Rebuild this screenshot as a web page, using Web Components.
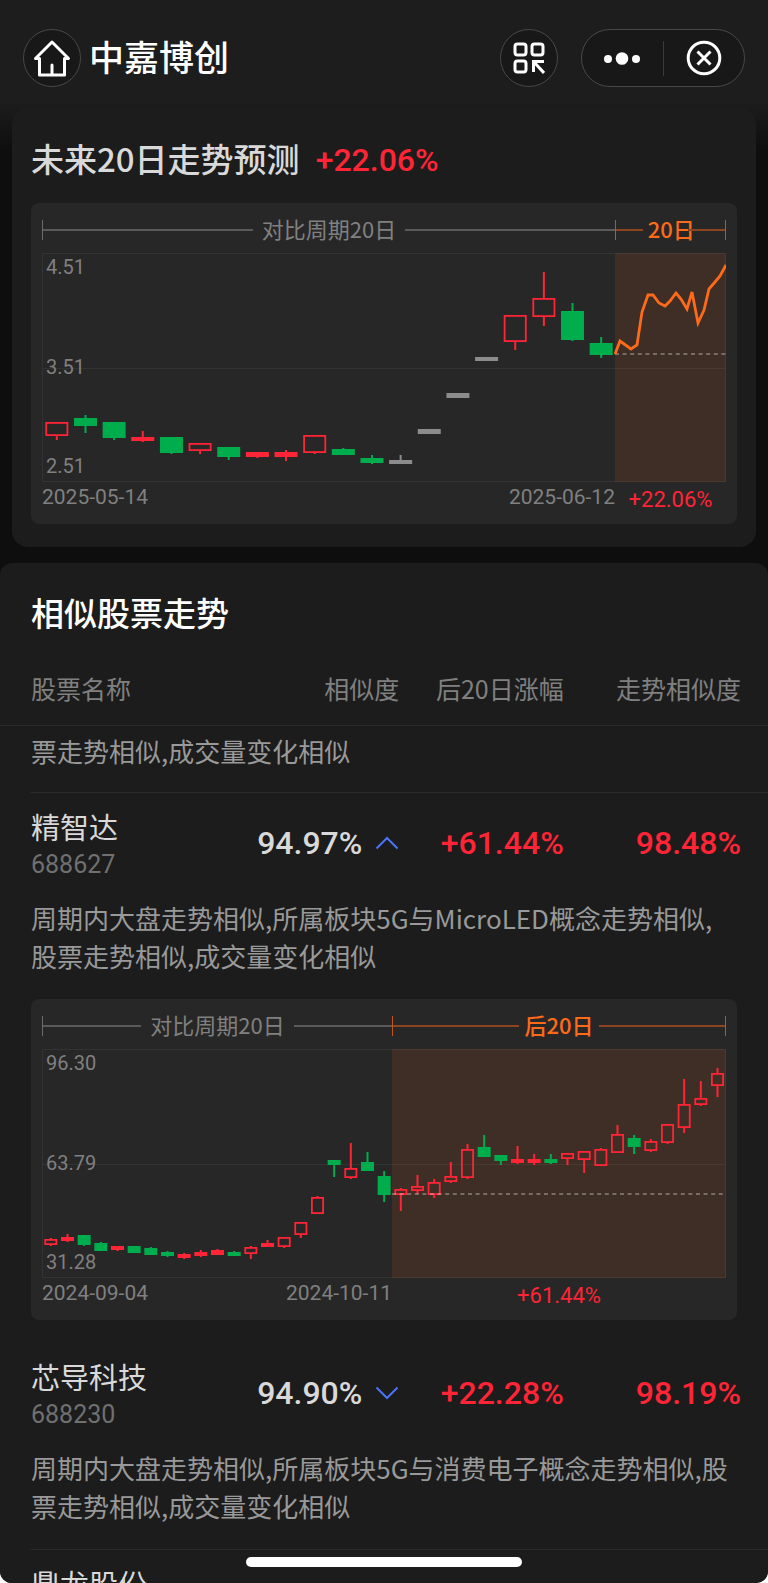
<!DOCTYPE html>
<html lang="zh-CN">
<head>
<meta charset="UTF-8">
<meta name="viewport" content="width=device-width, initial-scale=1">
<title>中嘉博创</title>
<style>
    html, body { margin: 0; height: 100%; background: #fff; }
    body { font-family: "Noto Sans CJK SC", "Noto Sans", sans-serif; }
</style>
</head>
<body>
<stock-app>
    <app-header slot="header" heading="中嘉博创"></app-header>
    <forecast-card heading="未来20日走势预测" change="+22.06%">
        <kline-chart data="forecast"></kline-chart>
    </forecast-card>
    <similar-stocks heading="相似股票走势"></similar-stocks>
</stock-app>

<script>
// Candles: [kind, high, top, bottom, low], y in plot units (0..229)
// kind: r = hollow up, f = flat up, g = down, n = unchanged
const CHARTS = {
    forecast: {
        past: '对比周期20日', next: '20日', compact: true,
        labels: ['4.51', '3.51', '2.51'],
        from: '2025-05-14', to: '2025-06-12', change: '+22.06%',
        split: 573, slots: 20, body: 23, base: 101,
        candles: [
            ['r', 169, 169, 183, 187], ['g', 162, 165, 173, 180], ['g', 169, 169, 185, 187],
            ['f', 178, 184, 188, 189], ['g', 184, 184, 200, 201], ['r', 190, 190, 198, 201],
            ['g', 194, 194, 204, 207], ['f', 199, 199, 204, 205], ['f', 197, 199, 204, 208],
            ['r', 182, 182, 200, 201], ['g', 195, 196, 202, 202], ['g', 202, 205, 210, 211],
            ['n', 202, 207, 211, 211], ['n', 176, 176, 181, 181], ['n', 140, 140, 145, 145],
            ['n', 104, 104, 108, 108], ['r', 62, 62, 89, 97], ['r', 19, 45, 64, 73],
            ['g', 50, 58, 87, 88], ['g', 84, 90, 102, 105]
        ],
        line: '573,101 578,88 589,96 595,92 600,59 606,42 611,42 617,50 623,53 628,48 634,40 639,46 645,56 650,39 656,70 662,57 667,36 673,29 678,23 684,12'
    },
    '688627': {
        past: '对比周期20日', next: '后20日',
        labels: ['96.30', '63.79', '31.28'],
        from: '2024-09-04', to: '2024-10-11', change: '+61.44%',
        split: 350, slots: 21, body: 13, base: 145,
        candles: [
            ['r', 189, 190, 196, 197], ['f', 185, 188, 192, 193], ['g', 186, 186, 196, 197],
            ['g', 193, 194, 202, 202], ['f', 197, 197, 201, 202], ['g', 197, 197, 204, 204],
            ['g', 198, 199, 206, 206], ['g', 202, 203, 207, 208], ['f', 204, 205, 209, 210],
            ['f', 201, 203, 207, 208], ['f', 200, 201, 206, 206], ['g', 202, 203, 207, 207],
            ['r', 197, 198, 205, 210], ['f', 191, 194, 198, 198], ['r', 188, 188, 198, 199],
            ['r', 173, 173, 186, 189], ['r', 147, 148, 165, 165], ['g', 111, 111, 116, 128],
            ['r', 94, 119, 129, 130], ['g', 103, 113, 122, 122], ['g', 122, 127, 146, 153],
            ['r', 139, 140, 146, 162], ['r', 126, 137, 142, 145], ['r', 130, 133, 146, 149],
            ['r', 113, 127, 133, 134], ['r', 95, 100, 129, 130], ['g', 86, 98, 108, 108],
            ['g', 106, 106, 112, 116], ['f', 97, 110, 114, 115], ['f', 105, 110, 114, 116],
            ['g', 105, 110, 114, 115], ['r', 104, 104, 110, 116], ['r', 102, 102, 111, 124],
            ['r', 99, 100, 117, 117], ['r', 76, 85, 104, 104], ['g', 86, 89, 98, 105],
            ['r', 90, 92, 102, 103], ['r', 75, 75, 94, 95], ['r', 30, 55, 79, 84],
            ['r', 32, 49, 56, 57], ['r', 19, 24, 37, 48]
        ]
    }
};

const STOCKS = [
    { desc: '票走势相似,成交量变化相似' },
    {
        name: '精智达', code: '688627', similar: '94.97%', gain: '+61.44%', trend: '98.48%', open: true,
        desc: '周期内大盘走势相似,所属板块5G与MicroLED概念走势相似,股票走势相似,成交量变化相似'
    },
    {
        name: '芯导科技', code: '688230', similar: '94.90%', gain: '+22.28%', trend: '98.19%',
        desc: '周期内大盘走势相似,所属板块5G与消费电子概念走势相似,股票走势相似,成交量变化相似'
    },
    { name: '鼎龙股份' }
];

class StockApp extends HTMLElement {
    constructor() {
        super();
        this.attachShadow({ mode: 'open' }).innerHTML = `
        <style>
            :host {
                display: flex; flex-direction: column; position: relative;
                height: 100vh; overflow: hidden; border-radius: 0 0 12px 12px;
                background: linear-gradient(#1d1d1d 100px, #0e0e0e 150px);
            }
            main { display: flex; flex-direction: column; gap: 16px; flex: 1; min-height: 0; }
            .home-bar {
                position: absolute; bottom: 16px; left: 32%; width: 36%; height: 10px;
                border-radius: 5px; background: #fff;
            }
        </style>
        <slot name="header"></slot>
        <main><slot></slot></main>
        <div class="home-bar"></div>
        `;
    }
}

class AppHeader extends HTMLElement {
    connectedCallback() {
        this.attachShadow({ mode: 'open' }).innerHTML = `
        <style>
            :host { display: flex; align-items: center; padding: 29px 23px 21px; color: #fff; }
            h1 { flex: 1; margin: 0 0 0 8px; padding-bottom: 4px; font-size: 35px; line-height: 54px; font-weight: 500; }
            button { display: flex; align-items: center; justify-content: center; padding: 0; border: 0; background: none; color: inherit; }
            .round, .capsule { box-sizing: border-box; height: 58px; border: 1px solid #484848; border-radius: 29px; background: #181818; }
            .round { width: 58px; }
            .capsule { display: flex; align-items: center; width: 164px; margin-left: 23px; }
            .capsule button { flex: 1; height: 100%; }
            .capsule i { width: 1px; height: 35px; background: #3a3a3a; }
            svg { display: block; fill: none; stroke: currentColor; }
        </style>
        <button class="round" aria-label="首页">
            <svg width="40" height="40" viewBox="0 0 40 40" stroke-width="3" stroke-linejoin="round" stroke-linecap="round">
                <path d="M7.500 37V20.500H3.500L20 4L36.500 20.500H32.500V37Z M20 27V37"/>
            </svg>
        </button>
        <h1>${this.getAttribute('heading')}</h1>
        <button class="round" aria-label="扫码">
            <svg width="32" height="32" viewBox="0 0 32 32" stroke-width="3">
                <rect x="2" y="2" width="11" height="11" rx="2.500"/>
                <rect x="19" y="2" width="11" height="11" rx="2.500"/>
                <rect x="2" y="19" width="11" height="11" rx="2.500"/>
                <path d="M31 19.500H20.500V30 M20.500 19.500L31 31"/>
            </svg>
        </button>
        <div class="capsule">
            <button aria-label="更多">
                <svg width="38" height="16" viewBox="0 0 38 16" style="fill: #fff; stroke: none">
                    <circle cx="5" cy="9" r="4"/><circle cx="19" cy="8.500" r="6.300"/><circle cx="33" cy="9" r="4"/>
                </svg>
            </button>
            <i></i>
            <button aria-label="关闭">
                <svg width="36" height="36" viewBox="0 0 36 36" stroke-width="3">
                    <circle cx="18" cy="18" r="15.800"/>
                    <path d="M11.500 11.500L24.500 24.500M24.500 11.500L11.500 24.500"/>
                </svg>
            </button>
        </div>
        `;
    }
}

class ForecastCard extends HTMLElement {
    connectedCallback() {
        this.attachShadow({ mode: 'open' }).innerHTML = `
        <style>
            :host { display: block; margin: 0 12px; padding: 28px 19px 23px; border-radius: 16px; background: #1c1c1c; }
            header { display: flex; align-items: center; gap: 16px; margin-bottom: 19px; }
            h2 { margin: 0; padding-bottom: 4px; font-size: 33px; line-height: 44px; font-weight: 500; color: #d9d9d9; }
            strong { font: 500 32px/48px Roboto, sans-serif; color: #ff2436; }
        </style>
        <header>
            <h2>${this.getAttribute('heading')}</h2>
            <strong>${this.getAttribute('change')}</strong>
        </header>
        <slot></slot>
        `;
    }
}

class KlineChart extends HTMLElement {
    connectedCallback() {
        const c = CHARTS[this.getAttribute('data')];
        const W = 684, H = 229;
        const pitch = c.split / c.slots;
        const colors = { r: '#ff2436', f: '#ff2436', g: '#00ad4c', n: '#8c8c8c' };

        const candles = c.candles.map(([kind, high, top, bottom, low], i) => {
            const cx = (i + 0.5) * pitch + 0.5;
            const x = cx - c.body / 2;
            const color = colors[kind];
            const wick = (a, b) => b > a ? `<path d="M${cx} ${a}V${b}" stroke="${color}" stroke-width="2"/>` : '';
            const body = kind === 'r'
                ? `<rect x="${x + 0.9}" y="${top + 0.9}" width="${c.body - 1.8}" height="${bottom - top - 1.8}" fill="none" stroke="${color}" stroke-width="1.8"/>`
                : `<rect x="${x}" y="${top}" width="${c.body}" height="${bottom - top}" fill="${color}"/>`;
            return wick(high, top) + body + wick(bottom, low);
        }).join('');

        this.attachShadow({ mode: 'open' }).innerHTML = `
        <style>
            :host { display: block; padding: 17px 11px 12px; border-radius: 8px; background: #272727; font-size: 22px; color: #808080; }
            .ruler, .dates { display: flex; }
            .past, .next { box-sizing: border-box; }
            .past { width: ${c.split / W * 100}%; }
            .next { flex: 1; }
            .ruler { height: 20px; margin-bottom: 13px; }
            .ruler > div { display: flex; align-items: center; gap: 9px; white-space: nowrap; border-left: 1px solid #6b6b6b; }
            .ruler > div::before, .ruler > div::after { content: ""; flex: 1; height: 2px; background: #5a5a5a; }
            .ruler span { padding-bottom: 4px; line-height: 20px; }
            .ruler > .next { gap: 5px; border-color: #c2531a; border-right: 1px solid #c2531a; color: #ff6a1a; font-weight: 500; }
            .ruler > .next::before, .ruler > .next::after { background: #8f4420; }
            .ruler > .compact::after { flex-grow: 1.4; margin-left: -12px; }
            .plot { display: grid; height: ${H}px; }
            .plot > * { grid-area: 1 / 1; }
            svg { display: block; width: 100%; height: ${H}px; }
            .labels { display: flex; flex-direction: column; justify-content: space-between; padding: 2px 4px 4px; font: 20px/24px Roboto, sans-serif; }
            .dates { height: 27px; padding-top: 3px; font: 21px/24px Roboto, sans-serif; }
            .dates .past { display: flex; justify-content: space-between; }
            .dates .next { text-align: center; font-size: 22px; line-height: 30px; color: #ff2436; }
        </style>
        <div class="ruler">
            <div class="past"><span>${c.past}</span></div>
            <div class="next ${c.compact ? 'compact' : ''}"><span>${c.next}</span></div>
        </div>
        <div class="plot">
            <svg viewBox="0 0 ${W} ${H}" preserveAspectRatio="none">
                <path d="M0.5 0.5H683.5V228.500H0.5ZM0 115.500H684" fill="none" stroke="#333"/>
                <rect x="${c.split}" width="${W - c.split}" height="${H}" fill="#ff6a1a" fill-opacity="0.11"/>
                ${candles}
                <path d="M${c.split} ${c.base}H${W}" stroke="#fff" stroke-opacity="0.3" stroke-width="1.800" stroke-dasharray="4 3.600"/>
                ${c.line ? `<polyline points="${c.line}" fill="none" stroke="#ff6a1a" stroke-width="2.800"/>` : ''}
            </svg>
            <div class="labels">${c.labels.map(l => `<span>${l}</span>`).join('')}</div>
        </div>
        <div class="dates">
            <div class="past"><span>${c.from}</span><span>${c.to}</span></div>
            <div class="next">${c.change}</div>
        </div>
        `;
    }
}

class SimilarStocks extends HTMLElement {
    constructor() {
        super();
        this.attachShadow({ mode: 'open' });
        this.stocks = STOCKS;
    }

    connectedCallback() {
        this.render();
        this.shadowRoot.addEventListener('click', e => {
            const btn = e.target.closest('button');
            if (!btn) return;
            const stock = this.stocks.find(s => s.code === btn.dataset.code);
            stock.open = !stock.open;
            this.render();
        });
    }

    row(s) {
        const main = s.name ? `
            <tr class="main">
                <td><div class="name">${s.name}</div><div class="code">${s.code || ''}</div></td>
                <td class="num">${s.similar ? `
                    <button data-code="${s.code}" aria-expanded="${!!s.open}">${s.similar}
                        <svg width="24" height="14" viewBox="0 0 24 14"><path d="${s.open ? 'M1.500 12.500L12 2L22.500 12.500' : 'M1.500 1.500L12 12L22.500 1.500'}"/></svg>
                    </button>` : ''}</td>
                <td class="num up">${s.gain || ''}</td>
                <td class="num up">${s.trend || ''}</td>
            </tr>` : '';
        const chart = s.open && CHARTS[s.code] ? `<kline-chart data="${s.code}"></kline-chart>` : '';
        const detail = s.desc ? `
            <tr><td class="detail ${s.name ? '' : 'first'}" colspan="4">
                <div class="${chart ? 'open' : ''}"><p>${s.desc}</p>${chart}</div>
            </td></tr>` : '';
        return `<tbody>${main}${detail}</tbody>`;
    }

    render() {
        this.shadowRoot.innerHTML = `
        <style>
            :host { display: block; flex: 1; min-height: 0; overflow: hidden; padding-top: 25px; border-radius: 12px 12px 0 0; background: #1c1c1c; }
            h2 { margin: 0 31px; font-size: 33px; line-height: 48px; font-weight: 500; color: #fff; }
            table { width: 100%; table-layout: fixed; border-collapse: separate; border-spacing: 0; }
            th { padding: 33px 0 18px; border-bottom: 1px solid #2b2b2b; font-size: 25px; line-height: 38px; font-weight: 400; color: #808080; text-align: right; white-space: nowrap; }
            td { padding: 0; vertical-align: top; }
            th:first-child { padding-left: 31px; text-align: left; }
            th:last-child, td:last-child { padding-right: 27px; }
            .main td { padding-top: 13px; }
            .main td:first-child { padding-left: 31px; }
            .name { padding-bottom: 3px; font-size: 29px; line-height: 40px; color: #d9d9d9; }
            .code { height: 32px; font: 25px/32px Roboto, sans-serif; color: #707070; }
            .main .num { padding-top: 30px; font: 500 32px/40px Roboto, sans-serif; color: #d9d9d9; text-align: right; }
            .main .up { color: #ff2436; }
            button { display: flex; align-items: center; justify-content: flex-end; gap: 13px; width: 100%; padding: 0; border: 0; background: none; font: inherit; color: inherit; }
            svg { fill: none; stroke: #4a74f5; stroke-width: 2; }
            td.detail { padding: 18px 0 0 31px; }
            td.first { padding-top: 6px; }
            .detail > div { padding: 0 31px 24px 0; border-bottom: 1px solid #2b2b2b; }
            .detail > .open { padding-bottom: 22px; border-color: transparent; }
            .first > div { padding-bottom: 22px; }
            p { margin: 0; font-size: 26px; line-height: 38px; color: #999; }
            kline-chart { margin-top: 24px; }
        </style>
        <h2>${this.getAttribute('heading')}</h2>
        <table>
            <colgroup><col style="width: 30%"><col style="width: 22%"><col style="width: 21.400%"><col></colgroup>
            <thead><tr><th>股票名称</th><th>相似度</th><th>后20日涨幅</th><th>走势相似度</th></tr></thead>
            ${this.stocks.map(s => this.row(s)).join('')}
        </table>
        `;
    }
}

customElements.define('stock-app', StockApp);
customElements.define('app-header', AppHeader);
customElements.define('forecast-card', ForecastCard);
customElements.define('kline-chart', KlineChart);
customElements.define('similar-stocks', SimilarStocks);
</script>
</body>
</html>
